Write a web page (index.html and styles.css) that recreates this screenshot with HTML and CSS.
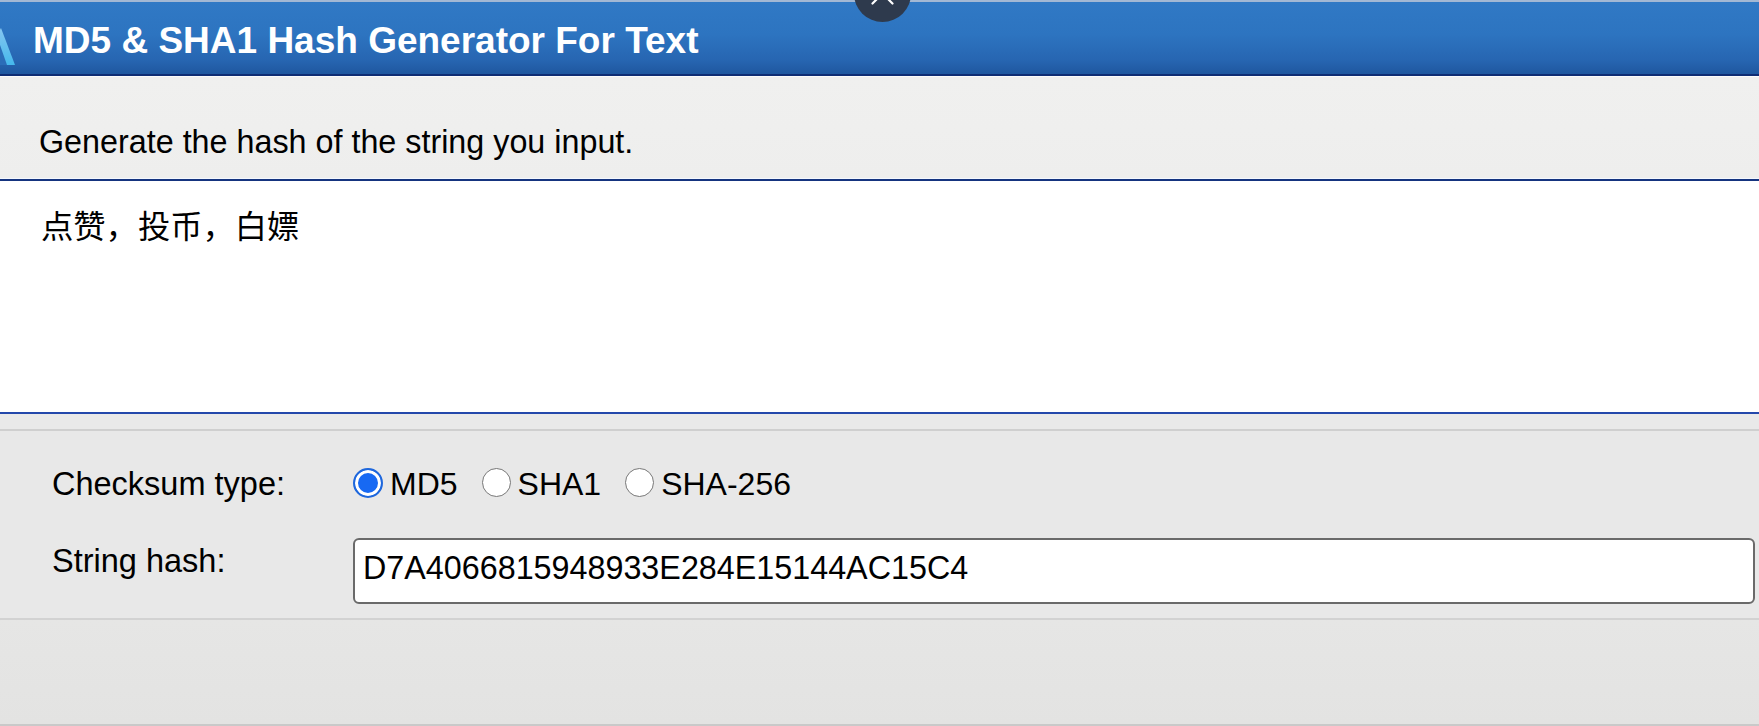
FILE: index.html
```html
<!DOCTYPE html>
<html lang="en">
<head>
<meta charset="utf-8">
<title>MD5 &amp; SHA1 Hash Generator For Text</title>
<link rel="stylesheet" href="styles.css">
</head>
<body>
<div class="page">
  <header class="hdr">
    <svg class="logo" width="40" height="40" viewBox="0 0 40 40" aria-hidden="true">
      <defs>
        <linearGradient id="lg" x1="0" y1="0" x2="0" y2="1">
          <stop offset="0" stop-color="#86c6f0"/>
          <stop offset="1" stop-color="#45b8ec"/>
        </linearGradient>
      </defs>
      <polygon points="26,0 40,37 2,37" fill="url(#lg)"/>
      <polygon points="24,14 32,37 14,37" fill="#2b6db8"/>
    </svg>
    <h1 class="title">MD5 &amp; SHA1 Hash Generator For Text</h1>
  </header>
  <div class="close-btn" aria-label="close">
    <svg width="57" height="57" viewBox="0 0 57 57" aria-hidden="true">
      <path d="M18.5 18.5 L38.5 38.5 M38.5 18.5 L18.5 38.5" stroke="#ffffff" stroke-width="2.2" stroke-linecap="round" fill="none"/>
    </svg>
  </div>
  <div class="desc">Generate the hash of the string you input.</div>
  <textarea class="src" spellcheck="false">点赞，投币，白嫖</textarea>
  <div class="spacer"></div>
  <div class="panel">
    <div class="row">
      <div class="lbl">Checksum type:</div>
      <div class="opts">
        <label class="opt"><input type="radio" name="t" class="radio" checked><span>MD5</span></label>
        <label class="opt"><input type="radio" name="t" class="radio"><span>SHA1</span></label>
        <label class="opt"><input type="radio" name="t" class="radio"><span>SHA-256</span></label>
      </div>
    </div>
    <div class="row">
      <div class="lbl lbl-hash">String hash:</div>
      <input type="text" class="hash" value="D7A4066815948933E284E15144AC15C4" readonly>
    </div>
  </div>
  <div class="footer"></div>
</div>
</body>
</html>
```

FILE: styles.css
```css
* { box-sizing: border-box; }
html, body {
  margin: 0;
  padding: 0;
  width: 1759px;
  height: 726px;
  overflow: hidden;
  background: #e6e6e6;
  font-family: "Liberation Sans", Arial, "Noto Sans CJK SC", sans-serif;
  color: #000;
}
.page {
  position: relative;
  width: 1759px;
  height: 726px;
  display: flex;
  flex-direction: column;
}
.hdr {
  height: 76px;
  flex: none;
  border-top: 2px solid #a2b8d4;
  border-bottom: 2px solid #0f2d74;
  background: linear-gradient(to bottom, #3079c5 0%, #2d74c0 45%, #2766b2 80%, #1f579f 100%);
  display: flex;
  align-items: flex-start;
  overflow: hidden;
}
.logo {
  flex: none;
  margin-left: -25px;
  margin-top: 26px;
}
.title {
  margin: 0 0 0 18px;
  padding-top: 18px;
  font-size: 37px;
  line-height: 42px;
  font-weight: bold;
  color: #ffffff;
  white-space: nowrap;
}
.close-btn {
  position: absolute;
  left: 854px;
  top: -35px;
  width: 57px;
  height: 57px;
  border-radius: 50%;
  background: #2e3a4d;
}
.close-btn svg { display: block; }
.desc {
  flex: none;
  height: 103px;
  border-top: 1px solid #fbfbfb;
  border-bottom: 1px solid #f4f8ff;
  background: linear-gradient(to bottom, #f0f0ef, #eeeeed);
  padding: 47px 0 0 39px;
  font-size: 32.3px;
  line-height: 37px;
  white-space: nowrap;
}
.src {
  display: block;
  flex: none;
  width: 100%;
  height: 235px;
  margin: 0;
  border: 0;
  border-top: 2px solid #15347f;
  border-bottom: 2px solid #2448ab;
  outline: none;
  resize: none;
  background: #ffffff;
  padding: 28px 0 0 41px;
  font-family: "Liberation Sans", Arial, "Noto Sans CJK SC", sans-serif;
  font-size: 32.3px;
  line-height: 37px;
  color: #000;
}
.spacer {
  flex: none;
  height: 15px;
  background: #e9e9e9;
}
.panel {
  flex: none;
  height: 191px;
  border-top: 2px solid #cfcfcf;
  border-bottom: 2px solid #d2d2d2;
  background: #e8e8e8;
  padding: 35px 4px 0 52px;
  display: flex;
  flex-direction: column;
  gap: 35px;
}
.row {
  display: grid;
  grid-template-columns: 301px 1fr;
  align-items: start;
}
.lbl {
  font-size: 32.5px;
  line-height: 37px;
  white-space: nowrap;
}
.lbl-hash { margin-top: 5px; }
.opts {
  display: flex;
  align-items: center;
  height: 37px;
}
.opt {
  display: flex;
  align-items: center;
  margin-right: 24px;
  font-size: 32px;
  line-height: 37px;
}
.radio {
  appearance: none;
  -webkit-appearance: none;
  margin: 0 7px 0 0;
  width: 29px;
  height: 29px;
  border-radius: 50%;
  border: 1.5px solid #777777;
  background: #ffffff;
  flex: none;
  position: relative;
  top: -2px;
}
.radio:checked {
  width: 30px;
  height: 30px;
  border: 2px solid #1e67dc;
  background: #1769f3;
  box-shadow: inset 0 0 0 3px #ffffff;
  margin-right: 7px;
}
.hash {
  display: block;
  width: 100%;
  height: 66px;
  margin: 0;
  border: 2px solid #6a6a6a;
  border-radius: 6px;
  background: #ffffff;
  padding: 0 10px 6px 8px;
  font-family: "Liberation Sans", Arial, sans-serif;
  font-size: 32.3px;
  color: #000;
  outline: none;
}
.footer {
  flex: 1;
  background: linear-gradient(to bottom, #e6e6e5, #e3e3e2);
  border-bottom: 2px solid #c9c9c9;
}
```
